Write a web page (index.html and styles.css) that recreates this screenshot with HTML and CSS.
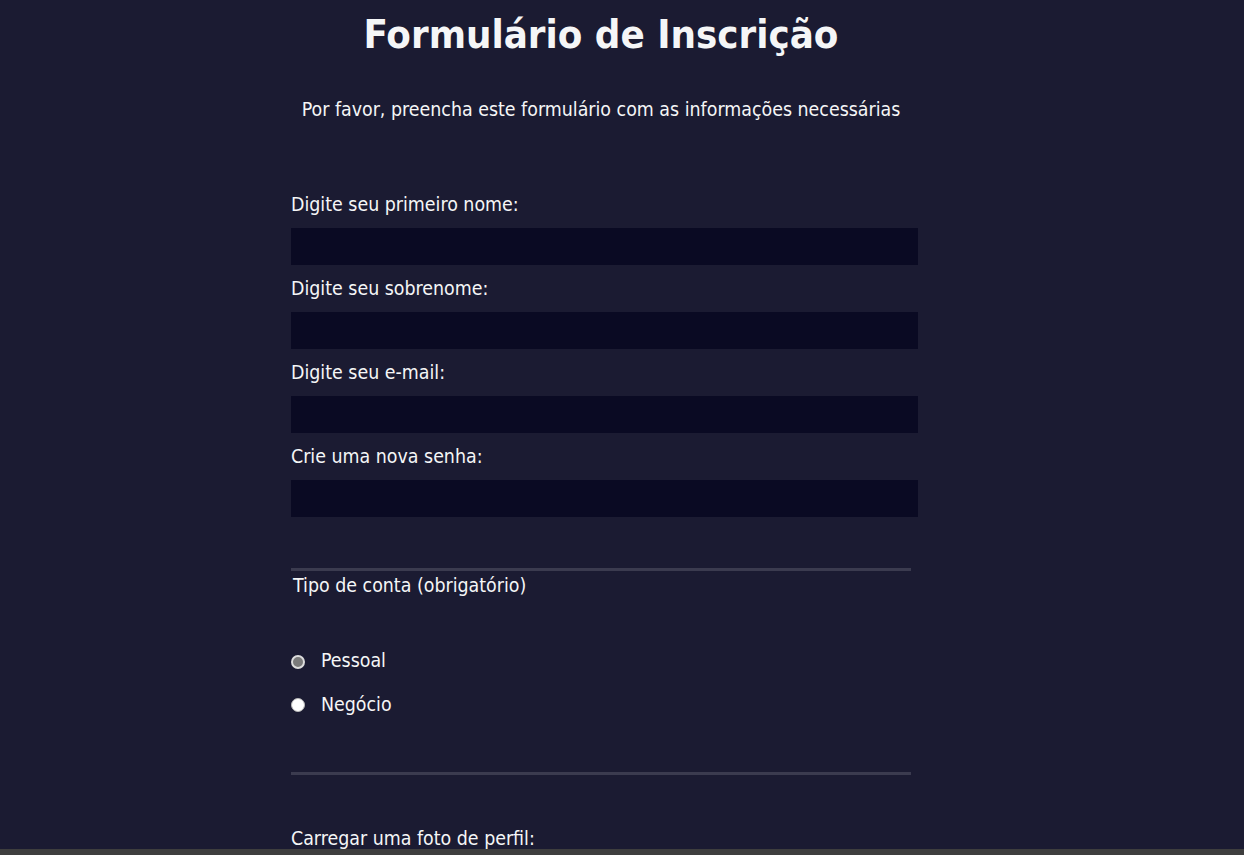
FILE: index.html
```html
<!DOCTYPE html>
<html lang="pt-BR">
<head>
<meta charset="utf-8">
<title>Formulário de Inscrição</title>
<link rel="stylesheet" href="styles.css">
</head>
<body>
<main class="page">
  <h1 class="title">Formulário de Inscrição</h1>
  <p class="intro">Por favor, preencha este formulário com as informações necessárias</p>
  <form class="form" action="#">
    <fieldset class="group group-first">
      <label class="field">Digite seu primeiro nome:<input class="text-input" type="text" name="first-name"></label>
      <label class="field">Digite seu sobrenome:<input class="text-input" type="text" name="last-name"></label>
      <label class="field">Digite seu e-mail:<input class="text-input" type="email" name="email"></label>
      <label class="field">Crie uma nova senha:<input class="text-input" type="password" name="password"></label>
    </fieldset>
    <fieldset class="group group-account">
      <legend class="legend">Tipo de conta (obrigatório)</legend>
      <label class="choice"><input class="radio" type="radio" name="account-type" checked><span>Pessoal</span></label>
      <label class="choice"><input class="radio" type="radio" name="account-type"><span>Negócio</span></label>
    </fieldset>
    <fieldset class="group group-profile">
      <label class="field">Carregar uma foto de perfil:<input class="file-input" type="file" name="file"></label>
    </fieldset>
  </form>
</main>
<div class="hscroll"></div>
</body>
</html>
```
FILE: styles.css
```css
html, body {
  margin: 0;
  padding: 0;
}

body {
  background-color: #1b1b32;
  color: #f5f6f7;
  font-family: "DejaVu Sans Condensed", "DejaVu Sans", sans-serif;
  font-stretch: condensed;
  font-size: 19.4px;
  line-height: 24px;
}

.page {
  width: 1202px;
  padding-top: 10px;
}

.title {
  margin: 0;
  font-size: 39.8px;
  line-height: 48px;
  font-weight: 700;
  text-align: center;
}

.intro {
  margin: 40px 0 0;
  text-align: center;
}

.form {
  width: 620px;
  margin: 0 auto;
  padding-top: 70px;
  padding-bottom: 40px;
}

.group {
  margin: 0;
  padding: 0;
  border: 0;
  min-width: 0;
}

.group-first {
  padding-bottom: 40px;
  border-bottom: 3px solid #3b3b4f;
}

.group-account {
  padding-bottom: 55px;
  border-bottom: 3px solid #3b3b4f;
}

.group-profile {
  padding-top: 51px;
}

.field {
  display: block;
  padding-top: 1px;
  margin-bottom: 11px;
}

.text-input {
  display: block;
  box-sizing: border-box;
  width: calc(100% + 7px);
  height: 37px;
  margin: 11px 0 0;
  padding: 0 4px;
  background-color: #0a0a23;
  border: 1px solid #0a0a23;
  color: #ffffff;
  font: inherit;
  outline: none;
}

.file-input {
  display: block;
  margin-top: 12px;
  color: #f5f6f7;
  font: inherit;
}

.legend {
  padding: 3px 2px 0;
}

.choice {
  display: flex;
  align-items: center;
  height: 24px;
  margin-bottom: 19.5px;
}

.group-account .legend + .choice {
  margin-top: 51px;
}

.choice:last-child {
  margin-bottom: 0;
}

.radio {
  appearance: none;
  -webkit-appearance: none;
  box-sizing: border-box;
  width: 14px;
  height: 14px;
  margin: 1px 16px 0 0;
  border-radius: 50%;
  background-color: #ffffff;
  border: 1px solid #b8b8b8;
  flex: none;
}

.radio:checked {
  background-color: #7a7a7a;
  border: 2px solid #dcdcdc;
}

.hscroll {
  position: fixed;
  left: 0;
  right: 0;
  bottom: 0;
  height: 6px;
  background-color: #3e3e3e;
}
```
